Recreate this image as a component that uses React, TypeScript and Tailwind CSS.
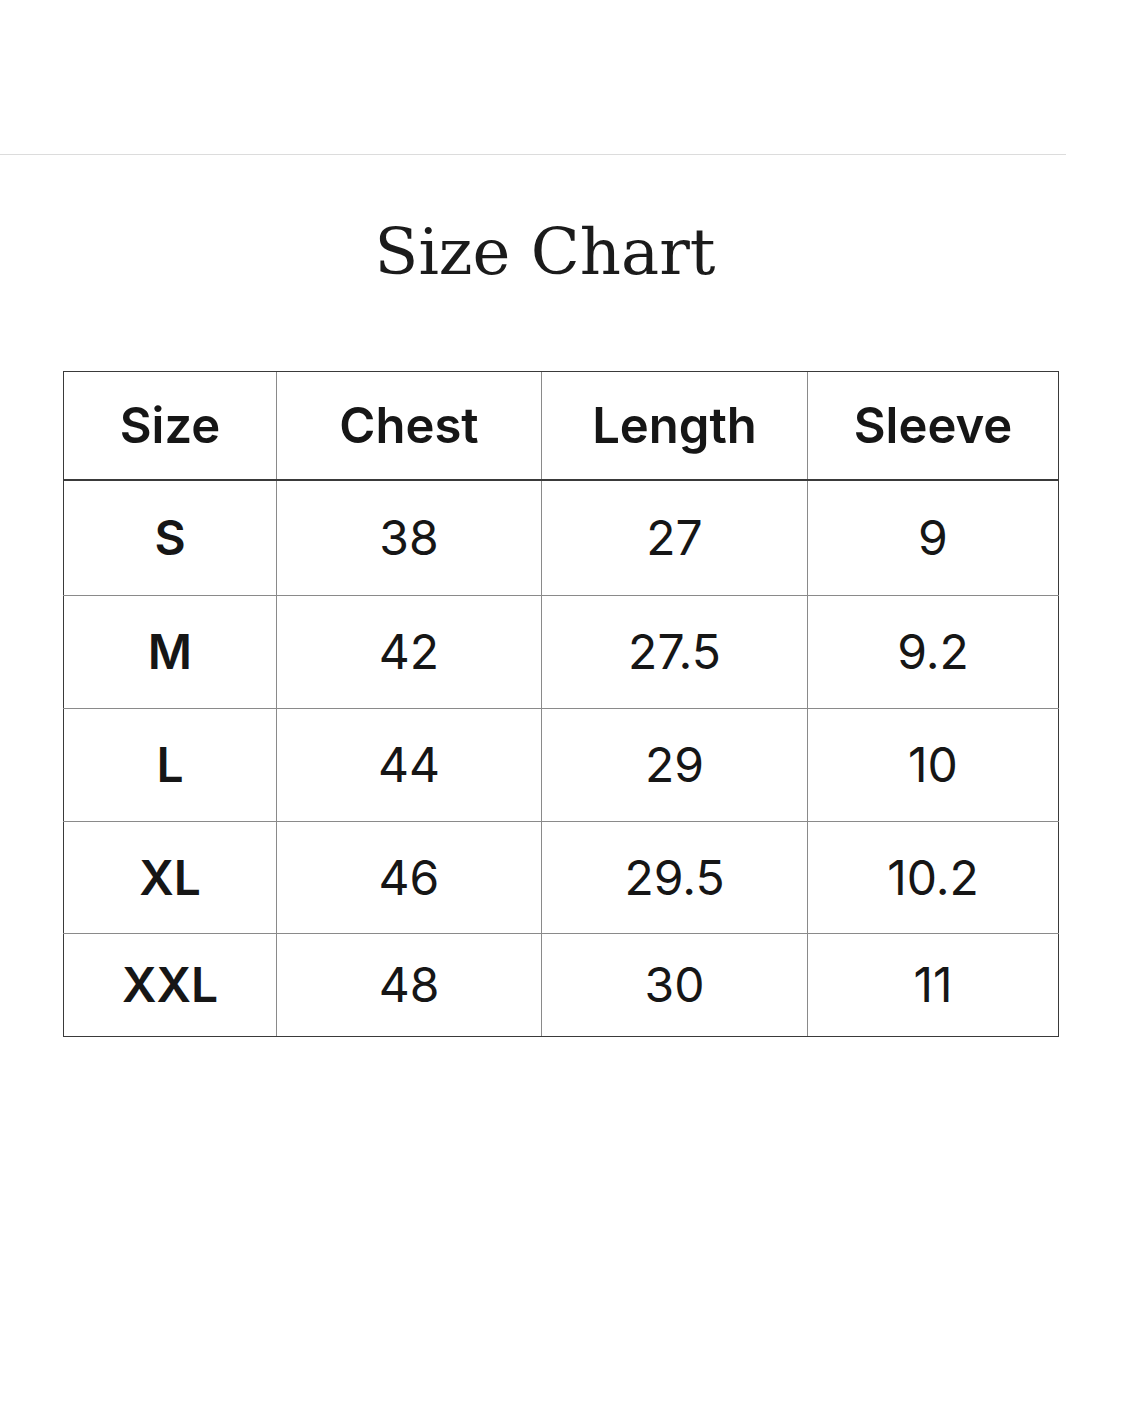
import React from "react";

const rows: [string, string, string, string][] = [
  ["S", "38", "27", "9"],
  ["M", "42", "27.5", "9.2"],
  ["L", "44", "29", "10"],
  ["XL", "46", "29.5", "10.2"],
  ["XXL", "48", "30", "11"],
];

const rowHeights = ["h-[116px]", "h-[113px]", "h-[113px]", "h-[112px]", "h-[103px]"];

export default function App() {
  return (
    <div className="w-[1122px] h-[1402px] bg-white relative overflow-hidden">
      <div className="h-[154px]" />
      <div className="h-px w-[1066px] bg-[#dcdcdc]" />
      <div className="pt-[65px] flex justify-center">
        <h1
          className="text-[64px] leading-none text-[#1b1b1b] ml-[-32px]"
          style={{ fontFamily: '"DejaVu Serif", "Liberation Serif", serif' }}
        >
          Size Chart
        </h1>
      </div>
      <div className="pt-[87px] pl-[63px]">
        <table
          className="border-collapse text-[#161616]"
          style={{ fontFamily: 'Inter, "Noto Sans", sans-serif' }}
        >
          <colgroup>
            <col className="w-[213px]" />
            <col className="w-[265px]" />
            <col className="w-[266px]" />
            <col className="w-[251px]" />
          </colgroup>
          <thead>
            <tr className="h-[108px]">
              {["Size", "Chest", "Length", "Sleeve"].map((h, i) => (
                <th
                  key={h}
                  className={`border-t-[1.5px] border-b-2 border-t-[#3a3a3a] border-b-[#3a3a3a] text-[49px] font-semibold text-center p-0 ${
                    i === 0 ? "border-l-[1.5px] border-l-[#3a3a3a]" : "border-l border-l-[#8a8a8a]"
                  } ${i === 3 ? "border-r-[1.5px] border-r-[#3a3a3a]" : ""}`}
                >
                  {h}
                </th>
              ))}
            </tr>
          </thead>
          <tbody>
            {rows.map((r, ri) => (
              <tr key={r[0]} className={rowHeights[ri]}>
                {r.map((c, ci) => (
                  <td
                    key={ci}
                    className={`text-center p-0 text-[48px] ${ci === 0 ? "font-semibold" : "font-normal"} ${
                      ri === rows.length - 1
                        ? "border-b-[1.5px] border-b-[#3a3a3a]"
                        : "border-b border-b-[#8a8a8a]"
                    } ${ci === 0 ? "border-l-[1.5px] border-l-[#3a3a3a]" : "border-l border-l-[#8a8a8a]"} ${
                      ci === 3 ? "border-r-[1.5px] border-r-[#3a3a3a]" : ""
                    }`}
                  >
                    {c}
                  </td>
                ))}
              </tr>
            ))}
          </tbody>
        </table>
      </div>
    </div>
  );
}
